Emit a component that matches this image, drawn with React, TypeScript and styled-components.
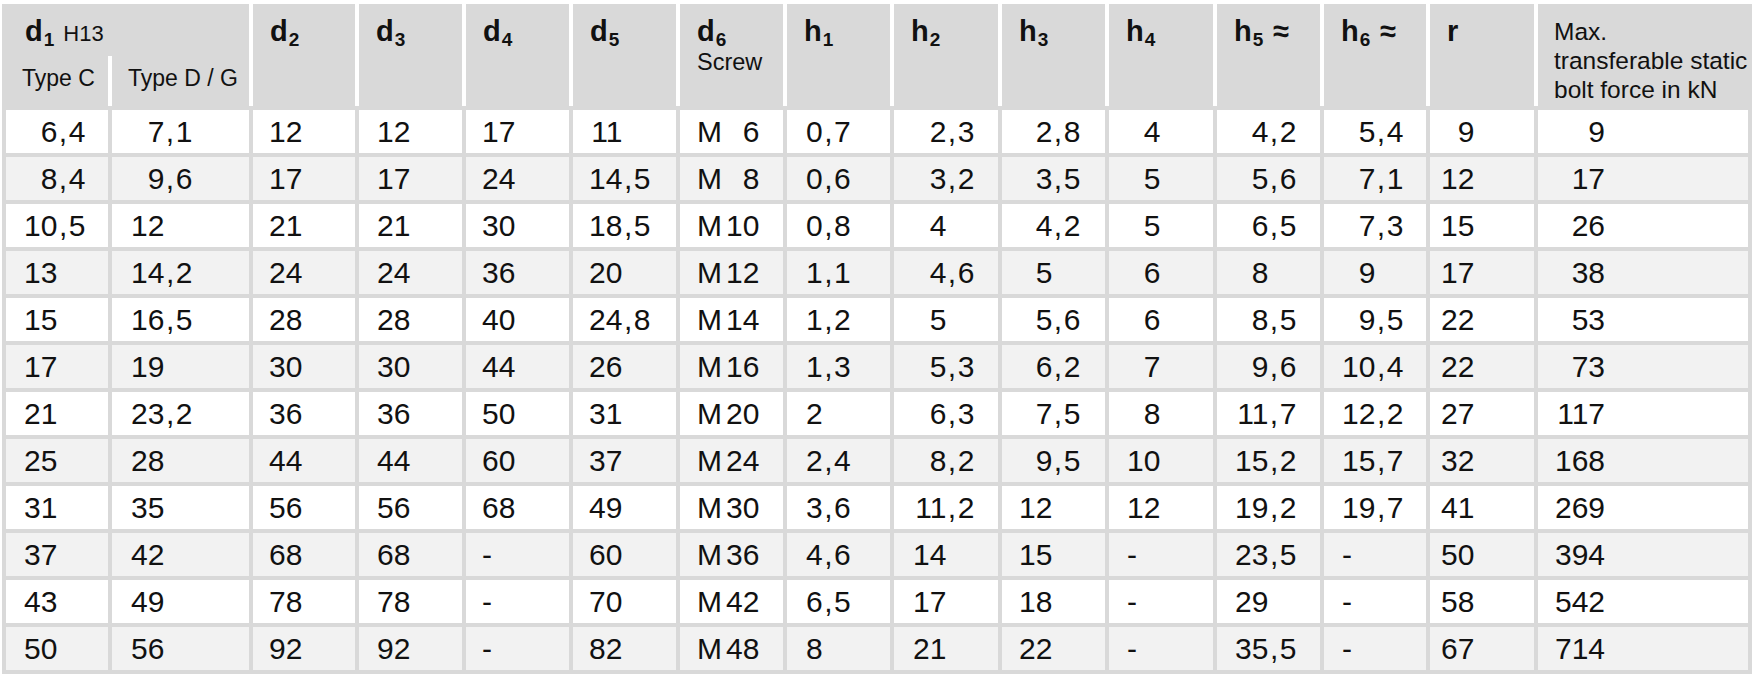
import React from "react";
import styled, { createGlobalStyle } from "styled-components";

const GlobalStyle = createGlobalStyle`
  html, body {
    margin: 0;
    padding: 0;
    background: #fff;
  }
  body {
    font-family: "Liberation Sans", Arial, sans-serif;
    color: #111;
  }
`;

const LINE = "#d9d9d9";
const HEAD = "#d9d9d9";
const STRIPE = "#f2f2f2";

const WIDTHS = [102, 137, 102, 103, 103, 103, 103, 103, 104, 103, 104, 103, 102, 104, 210];
const COLS = WIDTHS.map((w) => `${w}px`).join(" ");

type Column = { digits: number; pad: number; screw?: boolean };

const columns: Column[] = [
  { digits: 2, pad: 18 },
  { digits: 2, pad: 19 },
  { digits: 2, pad: 16 },
  { digits: 2, pad: 18 },
  { digits: 2, pad: 16 },
  { digits: 2, pad: 16 },
  { digits: 2, pad: 17, screw: true },
  { digits: 1, pad: 19 },
  { digits: 2, pad: 19 },
  { digits: 2, pad: 17 },
  { digits: 2, pad: 18 },
  { digits: 2, pad: 18 },
  { digits: 2, pad: 18 },
  { digits: 2, pad: 11 },
  { digits: 3, pad: 17 },
];

const rows: string[][] = [
  ["6,4", "7,1", "12", "12", "17", "11", "6", "0,7", "2,3", "2,8", "4", "4,2", "5,4", "9", "9"],
  ["8,4", "9,6", "17", "17", "24", "14,5", "8", "0,6", "3,2", "3,5", "5", "5,6", "7,1", "12", "17"],
  ["10,5", "12", "21", "21", "30", "18,5", "10", "0,8", "4", "4,2", "5", "6,5", "7,3", "15", "26"],
  ["13", "14,2", "24", "24", "36", "20", "12", "1,1", "4,6", "5", "6", "8", "9", "17", "38"],
  ["15", "16,5", "28", "28", "40", "24,8", "14", "1,2", "5", "5,6", "6", "8,5", "9,5", "22", "53"],
  ["17", "19", "30", "30", "44", "26", "16", "1,3", "5,3", "6,2", "7", "9,6", "10,4", "22", "73"],
  ["21", "23,2", "36", "36", "50", "31", "20", "2", "6,3", "7,5", "8", "11,7", "12,2", "27", "117"],
  ["25", "28", "44", "44", "60", "37", "24", "2,4", "8,2", "9,5", "10", "15,2", "15,7", "32", "168"],
  ["31", "35", "56", "56", "68", "49", "30", "3,6", "11,2", "12", "12", "19,2", "19,7", "41", "269"],
  ["37", "42", "68", "68", "-", "60", "36", "4,6", "14", "15", "-", "23,5", "-", "50", "394"],
  ["43", "49", "78", "78", "-", "70", "42", "6,5", "17", "18", "-", "29", "-", "58", "542"],
  ["50", "56", "92", "92", "-", "82", "48", "8", "21", "22", "-", "35,5", "-", "67", "714"],
];

const Page = styled.div`
  padding: 4px 0 0 2px;
`;

const Table = styled.div`
  width: fit-content;
  display: flex;
  flex-direction: column;
  gap: 4px;
  background: ${LINE};
  border: 4px solid ${LINE};
  border-top: 0;
`;

const HeadRow = styled.div`
  display: grid;
  grid-template-columns: ${COLS};
  column-gap: 4px;
  height: 102px;
  background: #fff;
`;

const HeadCell = styled.div<{ $pad?: number }>`
  background: ${HEAD};
  padding: 11px 0 0 ${(p) => p.$pad ?? 17}px;
  white-space: nowrap;
`;

const D1Cell = styled.div`
  grid-column: span 2;
  display: flex;
  flex-direction: column;
`;

const D1Top = styled.div`
  background: ${HEAD};
  height: 41px;
  padding: 11px 0 0 19px;
`;

const D1Types = styled.div`
  flex: 1;
  display: grid;
  grid-template-columns: ${WIDTHS[0]}px ${WIDTHS[1]}px;
  column-gap: 4px;
  background: #fff;
`;

const TypeCell = styled.div`
  background: ${HEAD};
  padding: 8px 0 0 16px;
  font-size: 23px;
  line-height: 28px;
  white-space: nowrap;
`;

const Symbol = styled.span`
  display: inline-block;
  font-weight: bold;
  font-size: 29px;
  line-height: 32px;
`;

const Sub = styled.span`
  font-size: 19px;
  line-height: 1;
  position: relative;
  top: 5px;
  margin-left: 1px;
`;

const Approx = styled.span`
  margin-left: 10px;
`;

const Note = styled.span`
  font-weight: normal;
  font-size: 22px;
  margin-left: 9px;
`;

const Caption = styled.div`
  font-size: 23.5px;
  line-height: 22px;
  margin-top: 4px;
`;

const ForceCaption = styled.div`
  font-size: 24.5px;
  line-height: 29px;
  margin-top: 2px;
`;

const BodyRow = styled.div`
  display: grid;
  grid-template-columns: ${COLS};
  column-gap: 4px;
  height: 43px;
`;

const Cell = styled.div<{ $shade: boolean; $pad: number }>`
  display: flex;
  background: ${(p) => (p.$shade ? STRIPE : "#fff")};
  padding-left: ${(p) => p.$pad}px;
  font-size: 30px;
  line-height: 43px;
  white-space: nowrap;
`;

const Int = styled.span<{ $digits: number }>`
  display: inline-block;
  min-width: ${(p) => p.$digits}ch;
  text-align: right;
`;

const Comma = styled.span`
  margin: 0 1.5px;
`;

const ScrewM = styled.span`
  margin-right: 4px;
`;

function Label({ letter, index, approx }: { letter: string; index: string; approx?: boolean }) {
  return (
    <Symbol>
      {letter}
      <Sub>{index}</Sub>
      {approx && <Approx>{"\u2248"}</Approx>}
    </Symbol>
  );
}

function Value({ text, col }: { text: string; col: Column }) {
  if (col.screw) {
    return (
      <>
        <ScrewM>M</ScrewM>
        <Int $digits={2}>{text}</Int>
      </>
    );
  }
  if (text === "-") return <span>-</span>;
  const [whole, frac] = text.split(",");
  return (
    <>
      <Int $digits={col.digits}>{whole}</Int>
      {frac !== undefined && (
        <>
          <Comma>,</Comma>
          <span>{frac}</span>
        </>
      )}
    </>
  );
}

export default function App() {
  return (
    <Page>
      <GlobalStyle />
      <Table>
        <HeadRow>
          <D1Cell>
            <D1Top>
              <Symbol>
                d<Sub>1</Sub>
              </Symbol>
              <Note>H13</Note>
            </D1Top>
            <D1Types>
              <TypeCell>Type C</TypeCell>
              <TypeCell>Type D / G</TypeCell>
            </D1Types>
          </D1Cell>
          <HeadCell>
            <Label letter="d" index="2" />
          </HeadCell>
          <HeadCell>
            <Label letter="d" index="3" />
          </HeadCell>
          <HeadCell>
            <Label letter="d" index="4" />
          </HeadCell>
          <HeadCell>
            <Label letter="d" index="5" />
          </HeadCell>
          <HeadCell>
            <Label letter="d" index="6" />
            <Caption>Screw</Caption>
          </HeadCell>
          <HeadCell>
            <Label letter="h" index="1" />
          </HeadCell>
          <HeadCell>
            <Label letter="h" index="2" />
          </HeadCell>
          <HeadCell>
            <Label letter="h" index="3" />
          </HeadCell>
          <HeadCell>
            <Label letter="h" index="4" />
          </HeadCell>
          <HeadCell>
            <Label letter="h" index="5" approx />
          </HeadCell>
          <HeadCell>
            <Label letter="h" index="6" approx />
          </HeadCell>
          <HeadCell>
            <Symbol>r</Symbol>
          </HeadCell>
          <HeadCell $pad={16}>
            <ForceCaption>
              Max.
              <br />
              transferable static
              <br />
              bolt force in kN
            </ForceCaption>
          </HeadCell>
        </HeadRow>
        {rows.map((row, i) => (
          <BodyRow key={i}>
            {row.map((v, j) => (
              <Cell key={j} $shade={i % 2 === 1} $pad={columns[j].pad}>
                <Value text={v} col={columns[j]} />
              </Cell>
            ))}
          </BodyRow>
        ))}
      </Table>
    </Page>
  );
}
